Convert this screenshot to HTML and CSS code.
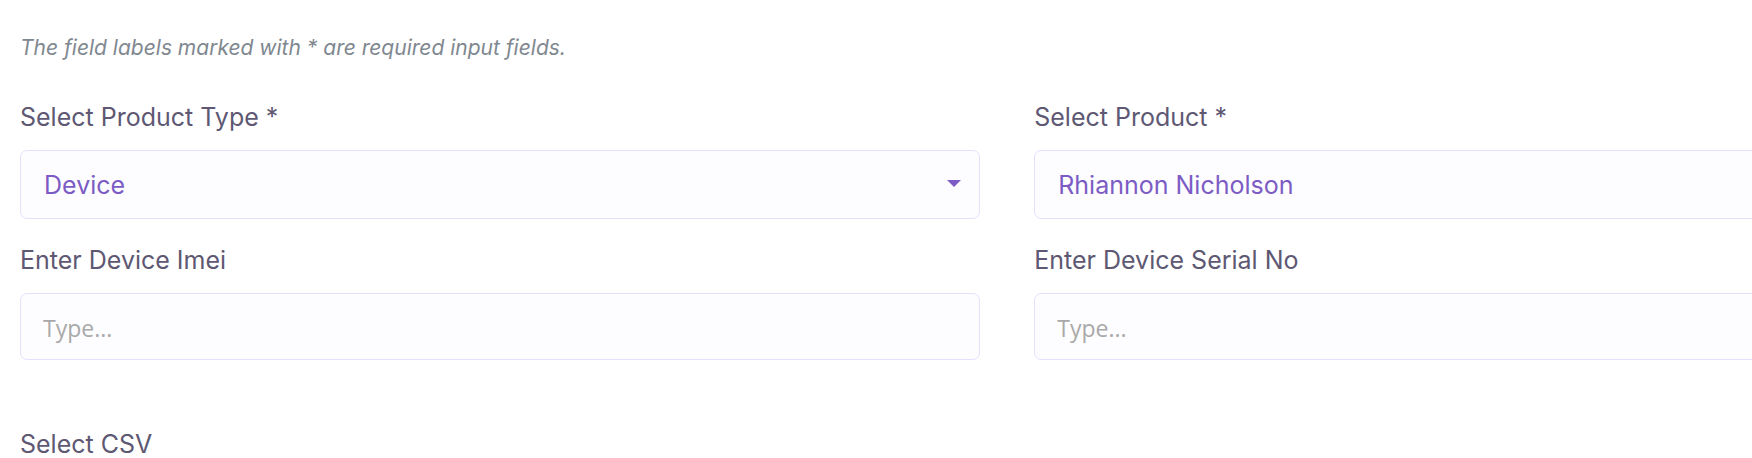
FILE: index.html
```html
<!DOCTYPE html>
<html lang="en">
<head>
<meta charset="utf-8">
<title>Add device</title>
<link rel="stylesheet" href="styles.css">
</head>
<body>
<form class="form">
  <p class="note">The field labels marked with * are required input fields.</p>
  <div class="grid">
    <div class="field">
      <label class="label" for="type">Select Product Type *</label>
      <div class="select-wrap">
        <select class="control select" id="type" required><option>Device</option></select>
        <svg class="caret" viewBox="0 0 14 7" aria-hidden="true"><path d="M0 0h14L7 7z"/></svg>
      </div>
    </div>
    <div class="field">
      <label class="label" for="product">Select Product *</label>
      <div class="select-wrap">
        <select class="control select" id="product" required><option>Rhiannon Nicholson</option></select>
        <svg class="caret" viewBox="0 0 14 7" aria-hidden="true"><path d="M0 0h14L7 7z"/></svg>
      </div>
    </div>
    <div class="field">
      <label class="label" for="imei">Enter Device Imei</label>
      <input class="control input" id="imei" type="text" placeholder="Type...">
    </div>
    <div class="field">
      <label class="label" for="serial">Enter Device Serial No</label>
      <input class="control input" id="serial" type="text" placeholder="Type...">
    </div>
  </div>
  <div class="csv">
    <span class="label">Select CSV</span>
  </div>
</form>
</body>
</html>
```
FILE: styles.css
```css
* { box-sizing: border-box; }
body {
  margin: 0;
  background: #fff;
  font-family: Inter, "Liberation Sans", sans-serif;
}
.form {
  padding: 32px 0 0 20px;
  overflow: hidden;
}
.note {
  margin: 0 0 36px;
  font-size: 21px;
  line-height: 32px;
  font-style: italic;
  color: #7f8890;
}
.grid {
  display: grid;
  grid-template-columns: 1fr 1fr;
  gap: 24px 54px;
  width: 114%;
}
.field { display: flex; flex-direction: column; gap: 16px; }
.label {
  font-size: 25px;
  line-height: 34px;
  color: #5e5873;
}
.select-wrap { display: flex; position: relative; }
.control {
  width: 100%;
  margin: 0;
  border: 1px solid #e2e2ff;
  border-radius: 7px;
  background: #fdfdff;
}
.select {
  appearance: none;
  height: 69px;
  padding: 0 23px;
  font-family: inherit;
  font-size: 25px;
  color: #7c5cc4;
}
.input {
  height: 67px;
  padding: 2px 22px 0;
  font-family: "Open Sans", "Noto Sans", sans-serif;
  font-size: 23px;
}
.input::placeholder { color: #a9a9a9; opacity: 1; }
.caret {
  position: absolute;
  right: 19px;
  top: 30px;
  width: 14px;
  height: 7px;
  fill: #7c5cc4;
  pointer-events: none;
}
.csv { padding-top: 67px; }
```
